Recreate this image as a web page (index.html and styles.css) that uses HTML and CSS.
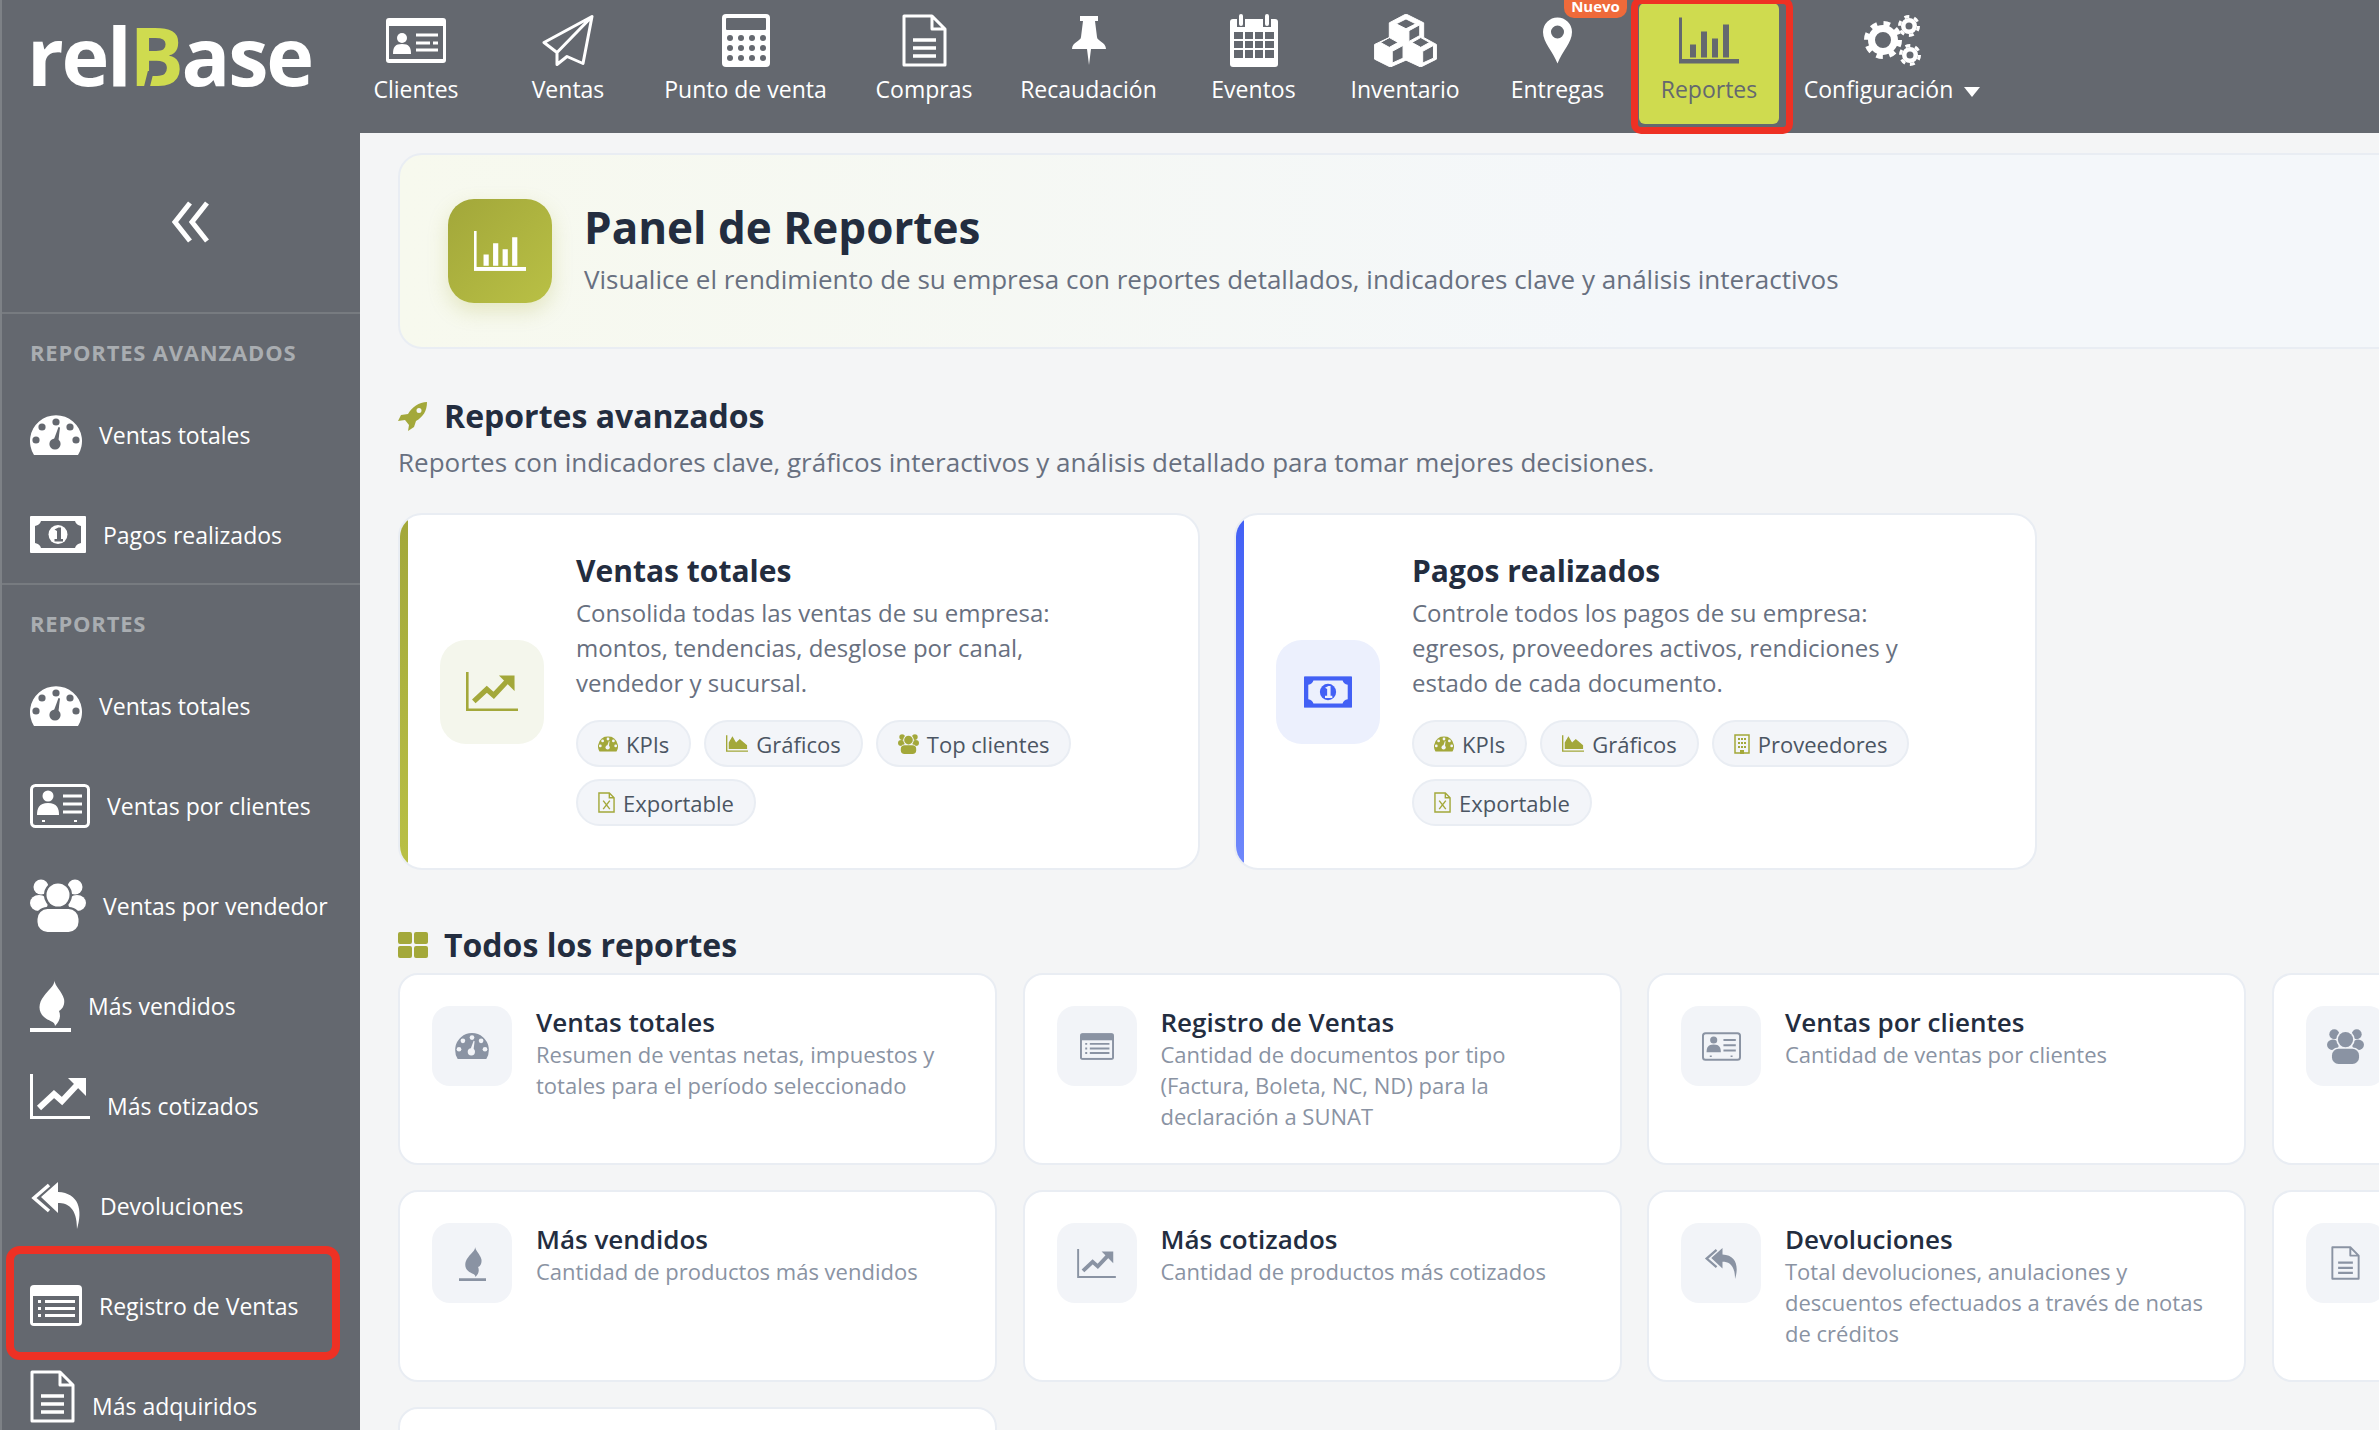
FILE: index.html
```html
<!DOCTYPE html>
<html lang="es">
<head>
  <meta charset="UTF-8">
  <title>Panel de Reportes</title>
  <link rel="stylesheet" href="styles.css">
</head>
<body>
  <svg class="sprite" xmlns="http://www.w3.org/2000/svg">
    <symbol id="i-gauge" viewBox="0 0 52 40">
      <mask id="m-gauge"><rect width="52" height="40" fill="#fff"/><g fill="#000"><circle cx="26" cy="7" r="3.6"/><circle cx="12" cy="12" r="3.6"/><circle cx="40" cy="12" r="3.6"/><circle cx="6" cy="25" r="3.6"/><circle cx="46" cy="25" r="3.6"/><circle cx="25" cy="29" r="5.6"/><path d="M23 27 L28.5 12 L30 12.6 L28 29Z"/></g></mask>
      <path mask="url(#m-gauge)" fill="currentColor" d="M4 40A26 26 0 1 1 48 40Z"/>
    </symbol>
    <symbol id="i-bill" viewBox="0 0 56 37">
      <mask id="m-bill"><rect width="56" height="37" fill="#fff"/><path fill="#000" d="M11 5H45Q46 9 51 10V27Q46 28 45 32H11Q10 28 5 27V10Q10 9 11 5Z"/><circle cx="28" cy="18.5" r="9.5" fill="#fff"/><path fill="#000" d="M24.5 13.500L28.500 11.500H31V23H33V25.500H24.500V23H27V15Z"/></mask>
      <rect mask="url(#m-bill)" width="56" height="37" rx="1" fill="currentColor"/>
    </symbol>
    <symbol id="i-card" viewBox="0 0 60 44">
      <rect x="1.500" y="1.500" width="57" height="41" rx="4" fill="none" stroke="currentColor" stroke-width="3"/>
      <path fill="currentColor" d="M12 38V36H15V38ZM44 38V36H47V38Z"/>
      <circle cx="18" cy="12" r="5.500" fill="currentColor"/>
      <path fill="currentColor" d="M7 31C7 24 9 19 18 19C27 19 29 24 29 31Z"/>
      <path stroke="currentColor" stroke-width="3" d="M33 12H52M33 20H52M33 28H52"/>
    </symbol>
    <symbol id="i-client" viewBox="0 0 60 45">
      <mask id="m-client"><rect width="60" height="45" fill="#fff"/><rect x="3" y="8" width="54" height="33" fill="#000"/></mask>
      <rect mask="url(#m-client)" width="60" height="45" rx="3" fill="currentColor"/>
      <circle cx="16" cy="20" r="5" fill="currentColor"/>
      <path fill="currentColor" d="M7 36C7 29 9 26 16 26C23 26 25 29 25 36Z"/>
      <path stroke="currentColor" stroke-width="3" d="M30 17H52M30 25H44M47 25H52M30 32H52"/>
    </symbol>
    <symbol id="i-plane" viewBox="0 0 52 52">
      <path fill="none" stroke="currentColor" stroke-width="3" stroke-linejoin="round" d="M50 2L2 28L15 38L15 50L25 42L41 49ZM50 2L15 38"/>
    </symbol>
    <symbol id="i-calc" viewBox="0 0 48 53">
      <mask id="m-calc"><rect width="48" height="53" fill="#fff"/><g fill="#000"><rect x="4" y="4" width="40" height="12" rx="1"/><circle cx="8" cy="24" r="3"/><circle cx="19" cy="24" r="3"/><circle cx="30" cy="24" r="3"/><circle cx="41" cy="24" r="3"/><circle cx="8" cy="34" r="3"/><circle cx="19" cy="34" r="3"/><circle cx="30" cy="34" r="3"/><circle cx="41" cy="34" r="3"/><circle cx="8" cy="44" r="3"/><circle cx="19" cy="44" r="3"/><circle cx="30" cy="44" r="3"/><circle cx="41" cy="44" r="3"/></g></mask>
      <rect mask="url(#m-calc)" width="48" height="53" rx="4" fill="currentColor"/>
    </symbol>
    <symbol id="i-doc" viewBox="0 0 45 53">
      <path fill="none" stroke="currentColor" stroke-width="3" stroke-linejoin="round" d="M2 2H30L43 15V51H2ZM30 2V15H43"/>
      <path stroke="currentColor" stroke-width="3.500" d="M11 26H34M11 34H34M11 42H34"/>
    </symbol>
    <symbol id="i-pin" viewBox="0 0 34 49">
      <path fill="currentColor" d="M8 0H26V5H23L25 21C25 25 34 26 34 33H19L17 49L15 33H0C0 26 9 25 9 21L11 5H8Z"/>
    </symbol>
    <symbol id="i-calendar" viewBox="0 0 48 53">
      <mask id="m-cal"><rect width="48" height="53" fill="#fff"/><g fill="#000"><rect x="7" y="2" width="8" height="11"/><rect x="33" y="2" width="8" height="11"/><rect x="4" y="18" width="9" height="7"/><rect x="15" y="18" width="8" height="7"/><rect x="25" y="18" width="8" height="7"/><rect x="35" y="18" width="9" height="7"/><rect x="4" y="27" width="9" height="7"/><rect x="15" y="27" width="8" height="7"/><rect x="25" y="27" width="8" height="7"/><rect x="35" y="27" width="9" height="7"/><rect x="4" y="36" width="9" height="8"/><rect x="15" y="36" width="8" height="8"/><rect x="25" y="36" width="8" height="8"/><rect x="35" y="36" width="9" height="8"/></g></mask>
      <rect mask="url(#m-cal)" y="5" width="48" height="48" rx="3" fill="currentColor"/>
      <rect x="9" width="4" height="12" rx="2" fill="currentColor"/>
      <rect x="35" width="4" height="12" rx="2" fill="currentColor"/>
    </symbol>
    <symbol id="i-cubes" viewBox="0 0 63 54">
      <path fill="currentColor" fill-rule="evenodd" stroke="currentColor" stroke-width="1" stroke-linejoin="round" d="M32 0L50 9V24L63 31V46L47 54L32 47L16 54L0 46V31L15 24V9ZM32 5L22 10L32 15L42 10ZM46 11L35 17V28L46 22ZM15 24L6 29L15 34L24 29ZM47 24L38 29L47 34L56 29ZM29 32L18 38V50L29 45ZM60 32L49 38V50L60 45Z"/>
    </symbol>
    <symbol id="i-marker" viewBox="0 0 29 46">
      <path fill="currentColor" fill-rule="evenodd" d="M14.500 0A14.500 14.500 0 0 1 29 14.500C29 25 19 34 14.500 46C10 34 0 25 0 14.500A14.500 14.500 0 0 1 14.500 0ZM14.500 8A6.500 6.500 0 1 0 14.500 21A6.500 6.500 0 1 0 14.500 8Z"/>
    </symbol>
    <symbol id="i-chart" viewBox="0 0 60 46">
      <path fill="none" stroke="currentColor" stroke-width="3" d="M1.500 0V43H60"/>
      <path fill="currentColor" d="M11 27H17V40H11ZM22 14H28V40H22ZM33 21H39V40H33ZM44 7H50V40H44Z"/>
      <rect y="42" width="60" height="4" fill="currentColor"/>
    </symbol>
    <symbol id="i-gears" viewBox="0 0 57 51">
      <g fill="none" stroke="currentColor">
        <circle cx="19" cy="25" r="11.500" stroke-width="7"/>
        <circle cx="19" cy="25" r="16.500" stroke-width="5" stroke-dasharray="6.500 6.460"/>
        <circle cx="45" cy="11" r="5.750" stroke-width="4.500"/>
        <circle cx="45" cy="11" r="9.500" stroke-width="3" stroke-dasharray="5 4.950"/>
        <circle cx="46" cy="40" r="5.750" stroke-width="4.500"/>
        <circle cx="46" cy="40" r="9.500" stroke-width="3" stroke-dasharray="5 4.950"/>
      </g>
    </symbol>
    <symbol id="i-trend" viewBox="0 0 60 45">
      <path fill="none" stroke="currentColor" stroke-width="3" d="M1.500 0V43.500H60"/>
      <path fill="none" stroke="currentColor" stroke-width="6" d="M9 34L24 20L32 27L47 11"/>
      <path fill="currentColor" d="M38 4H56V22Z"/>
    </symbol>
    <symbol id="i-flame" viewBox="0 0 41 53">
      <path fill="currentColor" d="M24 0C26 6 19 10 14 17C8 24 8 33 14 38C18 42 25 42 25 47C30 42 31 37 29 32C33 30 35 25 34 20C32 12 25 8 24 0ZM0 49H41V53H0Z"/>
    </symbol>
    <symbol id="i-reply" viewBox="0 0 53 47">
      <path fill="none" stroke="currentColor" stroke-width="3.500" d="M19 3L4 16L19 29"/>
      <path fill="currentColor" d="M28 0L11 15L28 31V21C38 21 47 26 47 47C53 28 49 11 28 10Z"/>
    </symbol>
    <symbol id="i-list" viewBox="0 0 52 41">
      <mask id="m-list"><rect width="52" height="41" fill="#fff"/><rect x="3" y="11" width="46" height="27" fill="#000"/></mask>
      <rect mask="url(#m-list)" width="52" height="41" rx="4" fill="currentColor"/>
      <path fill="currentColor" d="M8 15H11V18H8ZM8 22H11V25H8ZM8 29H11V32H8ZM15 15H45V18H15ZM15 22H45V25H15ZM15 29H45V32H15Z"/>
    </symbol>
    <symbol id="i-users" viewBox="0 0 56 53">
      <mask id="m-users"><rect width="56" height="53" fill="#fff"/><circle cx="28" cy="16" r="14" fill="#000"/><rect x="5" y="28" width="46" height="26" rx="12" fill="#000"/></mask>
      <g mask="url(#m-users)" fill="currentColor"><circle cx="11" cy="8" r="7.500"/><circle cx="45" cy="8" r="7.500"/><ellipse cx="9" cy="24" rx="9" ry="8"/><ellipse cx="47" cy="24" rx="9" ry="8"/></g>
      <circle cx="28" cy="16" r="11.500" fill="currentColor"/>
      <rect x="7.500" y="30" width="41" height="23" rx="10" fill="currentColor"/>
    </symbol>
    <symbol id="i-rocket" viewBox="0 0 30 30">
      <path fill="currentColor" fill-rule="evenodd" d="M29 1C21 1 14 6 10 13L3 14L0 20L7 19L11 24L10 30L16 26L18 20C25 16 29 10 29 1ZM21 7A2.500 2.500 0 1 0 21 12A2.500 2.500 0 1 0 21 7Z"/>
    </symbol>
    <symbol id="i-grid" viewBox="0 0 30 26">
      <path fill="currentColor" d="M2 0H12Q14 0 14 2V10Q14 12 12 12H2Q0 12 0 10V2Q0 0 2 0ZM18 0H28Q30 0 30 2V10Q30 12 28 12H18Q16 12 16 10V2Q16 0 18 0ZM2 14H12Q14 14 14 16V24Q14 26 12 26H2Q0 26 0 24V16Q0 14 2 14ZM18 14H28Q30 14 30 16V24Q30 26 28 26H18Q16 26 16 24V16Q16 14 18 14Z"/>
    </symbol>
    <symbol id="i-area" viewBox="0 0 24 18">
      <path fill="none" stroke="currentColor" stroke-width="1.500" d="M.75 0V17.250H24"/>
      <path fill="currentColor" d="M3 15V8L7 1L11 8L15 4L23 11V15Z"/>
    </symbol>
    <symbol id="i-xfile" viewBox="0 0 18 22">
      <path fill="none" stroke="currentColor" stroke-width="1.500" d="M1 1H12L17 6V21H1ZM12 1V6H17"/>
      <path fill="none" stroke="currentColor" stroke-width="1.500" d="M5.500 9L12.500 18M12.500 9L5.500 18"/>
    </symbol>
    <symbol id="i-building" viewBox="0 0 16 20">
      <path fill="none" stroke="currentColor" stroke-width="1.500" d="M1 1H15V19H1Z"/>
      <path fill="currentColor" d="M4 4H6V6H4ZM7 4H9V6H7ZM10 4H12V6H10ZM4 8H6V10H4ZM7 8H9V10H7ZM10 8H12V10H10ZM4 12H6V14H4ZM7 12H9V14H7ZM10 12H12V14H10ZM6 16H10V20H6Z"/>
    </symbol>
  </svg>

  <header class="topbar">
    <div class="logo">rel<span class="logo-b">B</span>ase</div>
    <nav class="nav">
      <a class="nav-item"><svg class="ico" width="60" height="45"><use href="#i-client"/></svg><span>Clientes</span></a>
      <a class="nav-item"><svg class="ico" width="52" height="52"><use href="#i-plane"/></svg><span>Ventas</span></a>
      <a class="nav-item"><svg class="ico" width="48" height="53"><use href="#i-calc"/></svg><span>Punto de venta</span></a>
      <a class="nav-item"><svg class="ico" width="45" height="53"><use href="#i-doc"/></svg><span>Compras</span></a>
      <a class="nav-item"><svg class="ico" width="34" height="49"><use href="#i-pin"/></svg><span>Recaudación</span></a>
      <a class="nav-item"><svg class="ico" width="48" height="53"><use href="#i-calendar"/></svg><span>Eventos</span></a>
      <a class="nav-item"><svg class="ico" width="63" height="54"><use href="#i-cubes"/></svg><span>Inventario</span></a>
      <a class="nav-item"><svg class="ico" width="29" height="46"><use href="#i-marker"/></svg><span>Entregas</span><em class="badge">Nuevo</em></a>
      <a class="nav-item active"><svg class="ico" width="60" height="46"><use href="#i-chart"/></svg><span>Reportes</span></a>
      <a class="nav-item"><svg class="ico" width="57" height="51"><use href="#i-gears"/></svg><span>Configuración<i class="caret"></i></span></a>
    </nav>
  </header>

  <div class="layout">
    <aside class="sidebar">
      <div class="collapse">
        <svg width="40" height="42" viewBox="0 0 40 42"><path fill="none" stroke="currentColor" stroke-width="5" d="M19 2L4 21L19 40M36 2L21 21L36 40"/></svg>
      </div>
      <section class="side-section">
        <h4>REPORTES AVANZADOS</h4>
        <a class="side-item"><svg width="52" height="40"><use href="#i-gauge"/></svg>Ventas totales</a>
        <a class="side-item"><svg width="56" height="37"><use href="#i-bill"/></svg>Pagos realizados</a>
      </section>
      <section class="side-section">
        <h4>REPORTES</h4>
        <a class="side-item"><svg width="52" height="40"><use href="#i-gauge"/></svg>Ventas totales</a>
        <a class="side-item"><svg width="60" height="44"><use href="#i-card"/></svg>Ventas por clientes</a>
        <a class="side-item"><svg width="56" height="53"><use href="#i-users"/></svg>Ventas por vendedor</a>
        <a class="side-item"><svg width="41" height="53"><use href="#i-flame"/></svg>Más vendidos</a>
        <a class="side-item"><svg class="raised" width="60" height="45"><use href="#i-trend"/></svg>Más cotizados</a>
        <a class="side-item"><svg width="53" height="47"><use href="#i-reply"/></svg>Devoluciones</a>
        <a class="side-item marked"><svg width="52" height="41"><use href="#i-list"/></svg>Registro de Ventas</a>
        <a class="side-item"><svg class="raised" width="45" height="53"><use href="#i-doc"/></svg>Más adquiridos</a>
      </section>
    </aside>

    <main class="content">
      <div class="hero">
        <div class="hero-icon"><svg width="52" height="40"><use href="#i-chart"/></svg></div>
        <div class="hero-text">
          <h1>Panel de Reportes</h1>
          <p>Visualice el rendimiento de su empresa con reportes detallados, indicadores clave y análisis interactivos</p>
        </div>
      </div>

      <h2 class="section-title adv"><svg width="30" height="30"><use href="#i-rocket"/></svg>Reportes avanzados</h2>
      <p class="section-sub">Reportes con indicadores clave, gráficos interactivos y análisis detallado para tomar mejores decisiones.</p>

      <div class="feature-grid">
        <article class="feature olive">
          <div class="feature-bar"></div>
          <div class="feature-icon"><svg width="52" height="39"><use href="#i-trend"/></svg></div>
          <div class="feature-body">
            <h3>Ventas totales</h3>
            <p>Consolida todas las ventas de su empresa: montos, tendencias, desglose por canal, vendedor y sucursal.</p>
            <div class="tags">
              <span class="tag"><svg width="20" height="16"><use href="#i-gauge"/></svg>KPIs</span>
              <span class="tag"><svg width="22" height="17"><use href="#i-area"/></svg>Gráficos</span>
              <span class="tag"><svg width="21" height="20"><use href="#i-users"/></svg>Top clientes</span>
              <span class="tag"><svg width="17" height="21"><use href="#i-xfile"/></svg>Exportable</span>
            </div>
          </div>
        </article>
        <article class="feature blue">
          <div class="feature-bar"></div>
          <div class="feature-icon"><svg width="48" height="32"><use href="#i-bill"/></svg></div>
          <div class="feature-body">
            <h3>Pagos realizados</h3>
            <p>Controle todos los pagos de su empresa: egresos, proveedores activos, rendiciones y estado de cada documento.</p>
            <div class="tags">
              <span class="tag"><svg width="20" height="16"><use href="#i-gauge"/></svg>KPIs</span>
              <span class="tag"><svg width="22" height="17"><use href="#i-area"/></svg>Gráficos</span>
              <span class="tag"><svg width="16" height="20"><use href="#i-building"/></svg>Proveedores</span>
              <span class="tag"><svg width="17" height="21"><use href="#i-xfile"/></svg>Exportable</span>
            </div>
          </div>
        </article>
      </div>

      <h2 class="section-title all"><svg width="30" height="26"><use href="#i-grid"/></svg>Todos los reportes</h2>

      <div class="report-grid">
        <article class="report">
          <div class="report-icon"><svg width="34" height="26"><use href="#i-gauge"/></svg></div>
          <div><h3>Ventas totales</h3><p>Resumen de ventas netas, impuestos y totales para el período seleccionado</p></div>
        </article>
        <article class="report">
          <div class="report-icon"><svg width="34" height="27"><use href="#i-list"/></svg></div>
          <div><h3>Registro de Ventas</h3><p>Cantidad de documentos por tipo (Factura, Boleta, NC, ND) para la declaración a SUNAT</p></div>
        </article>
        <article class="report">
          <div class="report-icon"><svg width="39" height="29"><use href="#i-card"/></svg></div>
          <div><h3>Ventas por clientes</h3><p>Cantidad de ventas por clientes</p></div>
        </article>
        <article class="report">
          <div class="report-icon"><svg width="37" height="35"><use href="#i-users"/></svg></div>
        </article>
        <article class="report">
          <div class="report-icon"><svg width="27" height="35"><use href="#i-flame"/></svg></div>
          <div><h3>Más vendidos</h3><p>Cantidad de productos más vendidos</p></div>
        </article>
        <article class="report">
          <div class="report-icon"><svg width="39" height="29"><use href="#i-trend"/></svg></div>
          <div><h3>Más cotizados</h3><p>Cantidad de productos más cotizados</p></div>
        </article>
        <article class="report">
          <div class="report-icon"><svg width="35" height="31"><use href="#i-reply"/></svg></div>
          <div><h3>Devoluciones</h3><p>Total devoluciones, anulaciones y descuentos efectuados a través de notas de créditos</p></div>
        </article>
        <article class="report">
          <div class="report-icon"><svg width="29" height="34"><use href="#i-doc"/></svg></div>
        </article>
        <article class="report"></article>
      </div>
    </main>
  </div>
</body>
</html>
```

FILE: styles.css
```css
/* base */
* {
  box-sizing: border-box;
}

html, body {
  margin: 0;
  height: 1430px;
  overflow: hidden;
}

body {
  font-family: "Open Sans", "Liberation Sans", sans-serif;
  background-color: #f4f5f6;
  color: #232d3f;
}

h1, h2, h3, h4, p {
  margin: 0;
}

.sprite {
  position: absolute;
  width: 0;
  height: 0;
}

svg {
  display: block;
  flex: none;
}

/* top bar */
.topbar {
  display: flex;
  height: 133px;
  background-color: #64686f;
  border-left: 2px solid #7d8186;
  color: #fff;
}

.logo {
  width: 338px;
  padding-left: 25px;
  font-size: 81px;
  font-weight: 700;
  line-height: 110px;
  letter-spacing: -2.300px;
}

.logo-b {
  position: relative;
  color: #cfdb4f;
}

/* the slit in the logo's B */
.logo-b::after {
  content: "";
  position: absolute;
  left: 17px;
  bottom: 24px;
  width: 6px;
  height: 15px;
  background-color: #64686f;
  transform: skewX(-14deg);
}

.nav {
  display: grid;
  grid-template-columns: 152px 152px 203px 154px 175px 155px 148px 157px 146px 220px;
}

.nav-item {
  position: relative;
  display: flex;
  flex-direction: column;
  align-items: center;
  height: 121px;
  margin-top: 3px;
  padding-top: 11px;
  font-size: 23px;
  color: #fff;
}

.nav-item .ico {
  height: 53px;
}

.nav-item span {
  margin-top: 5px;
  line-height: 34px;
  white-space: nowrap;
}

.nav-item.active {
  margin-left: 3px;
  margin-right: 3px;
  background-color: #cfdb4f;
  border-radius: 6px;
  color: #64686f;
}

/* annotation drawn over the shot */
.nav-item.active::after {
  content: "";
  position: absolute;
  top: -6px;
  left: -8px;
  right: -14px;
  bottom: -10px;
  border: 7px solid #ee3124;
  border-radius: 10px;
}

.badge {
  position: absolute;
  top: -3px;
  right: 9px;
  width: 63px;
  height: 18px;
  border-radius: 0 0 10px 10px;
  background-color: #ef6a3a;
  font-size: 15px;
  font-style: normal;
  font-weight: 700;
  line-height: 12px;
  text-align: center;
}

.caret {
  display: inline-block;
  margin-left: 11px;
  vertical-align: middle;
  border-left: 8px solid transparent;
  border-right: 8px solid transparent;
  border-top: 10px solid #fff;
}

/* sidebar */
.layout {
  display: flex;
  height: 1297px;
}

.sidebar {
  flex: none;
  width: 360px;
  background-color: #64686f;
  border-left: 2px solid #7d8186;
  color: #fff;
}

.collapse {
  display: flex;
  align-items: center;
  justify-content: center;
  height: 179px;
  padding: 0 0 2px 20px;
}

.side-section {
  border-top: 2px solid #777b80;
}

.side-section + .side-section {
  margin-top: -2px;
}

.side-section h4 {
  height: 71px;
  padding: 23px 0 0 28px;
  font-size: 22px;
  font-weight: 700;
  line-height: 30px;
  letter-spacing: 0.8px;
  color: #a9adb1;
}

.side-item {
  position: relative;
  display: flex;
  align-items: center;
  gap: 17px;
  height: 100px;
  padding: 0 0 1px 28px;
  font-size: 23px;
}

.raised {
  margin-top: -18px;
}

.side-item.marked::after {
  content: "";
  position: absolute;
  top: -10px;
  left: 4px;
  width: 318px;
  height: 98px;
  border: 8px solid #ee3124;
  border-radius: 14px;
}

/* main */
.content {
  width: 2100px;
  flex: none;
  padding: 20px 0 0 38px;
}

.hero {
  display: flex;
  align-items: center;
  gap: 32px;
  height: 196px;
  padding-left: 48px;
  border: 2px solid #e9edf3;
  border-radius: 24px;
  background: linear-gradient(90deg, #f7f9ee, #f4f7fa 60%);
}

.hero-icon {
  display: flex;
  align-items: center;
  justify-content: center;
  width: 104px;
  height: 104px;
  border-radius: 26px;
  background: linear-gradient(135deg, #a2a73a, #b9c045);
  box-shadow: 0 8px 20px rgba(170, 175, 60, 0.25);
  color: #fff;
}

.hero-text {
  padding-bottom: 8px;
}

.hero h1 {
  margin-bottom: 4px;
  font-size: 44px;
  font-weight: 700;
  line-height: 60px;
}

.hero p {
  font-size: 26px;
  line-height: 36px;
  color: #687080;
}

.section-title {
  display: flex;
  align-items: center;
  gap: 16px;
  font-size: 32px;
  font-weight: 700;
  line-height: 44px;
}

.section-title svg {
  color: #a3a83a;
}

.section-title.adv {
  margin-top: 45px;
}

.section-title.all {
  margin-top: 53px;
}

.section-sub {
  margin-top: 6px;
  font-size: 26px;
  line-height: 36px;
  color: #687080;
}

.feature-grid {
  display: grid;
  grid-template-columns: 802px 803px;
  gap: 34px;
  margin-top: 33px;
}

.feature {
  display: flex;
  align-items: center;
  height: 357px;
  overflow: hidden;
  border: 2px solid #e9edf3;
  border-radius: 24px;
  background-color: #fff;
}

.feature-bar {
  align-self: stretch;
  width: 8px;
  background: linear-gradient(180deg, #a2a73a, #b9c045);
}

.olive .feature-icon {
  background-color: #f4f6ec;
  color: #a3a83a;
}

.blue .feature-bar {
  background: linear-gradient(180deg, #4260f5, #6f88fb);
}

.blue .feature-icon {
  background-color: #ecf0fd;
  color: #4260f5;
}

.feature-icon {
  display: flex;
  align-items: center;
  justify-content: center;
  flex: none;
  width: 104px;
  height: 104px;
  margin: 0 32px;
  border-radius: 26px;
}

.feature-body {
  flex: 1;
  align-self: flex-start;
  padding: 36px 70px 0 0;
}

.feature h3 {
  font-size: 30px;
  font-weight: 700;
  line-height: 40px;
}

.feature p {
  margin-top: 4px;
  font-size: 24px;
  line-height: 35px;
  color: #687080;
}

.tags {
  display: flex;
  flex-wrap: wrap;
  gap: 12px 13px;
  margin-top: 20px;
}

.tag {
  display: flex;
  align-items: center;
  gap: 8px;
  height: 47px;
  padding: 0 20px;
  border: 2px solid #e9edf3;
  border-radius: 24px;
  background-color: #f3f5f9;
  font-size: 22px;
  color: #4b5563;
}

.tag svg {
  color: #a3a83a;
}

.report-grid {
  display: grid;
  grid-template-columns: repeat(4, 599px);
  grid-auto-rows: 192px;
  gap: 25px 25.500px;
  margin-top: 6px;
}

.report {
  display: flex;
  gap: 24px;
  padding: 31px 20px 0 32px;
  border: 2px solid #e9edf3;
  border-radius: 20px;
  background-color: #fff;
}

.report-icon {
  display: flex;
  align-items: center;
  justify-content: center;
  flex: none;
  width: 80px;
  height: 80px;
  border-radius: 18px;
  background-color: #f2f4f8;
  color: #8a93a3;
}

.report h3 {
  font-size: 26px;
  font-weight: 600;
  line-height: 32px;
}

.report p {
  margin-top: 1px;
  font-size: 22px;
  line-height: 30.800px;
  color: #8a93a3;
}
```
